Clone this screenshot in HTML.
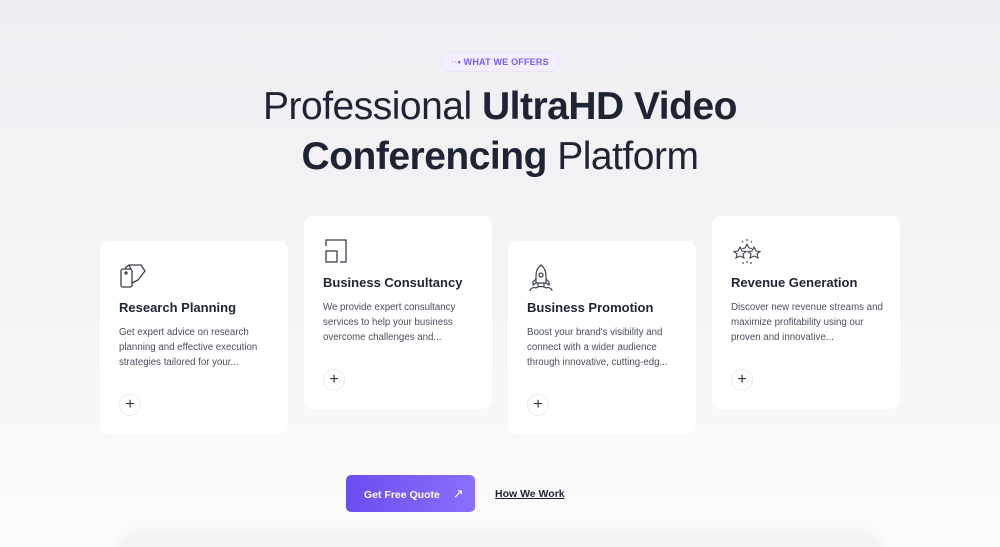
<!DOCTYPE html>
<html style="overflow:hidden;width:1000px;height:547px;background:#fcfcfc"><head><meta charset="utf-8"><style>
*{margin:0;padding:0;box-sizing:border-box}
body{width:1000px;height:547px;overflow:hidden;font-family:"Liberation Sans",sans-serif;background:linear-gradient(#efeef2 0%,#f4f4f6 50%,#fcfcfc 100%);position:relative;color:#1e2433}
.pill{position:absolute;left:441px;top:52px;width:118px;height:20px;border-radius:10px;background:#f3eefe;border:1px solid #ebe4fb;color:#7b5cf0;font-size:9px;font-weight:bold;line-height:18px;text-align:center;letter-spacing:.2px}
h1{position:absolute;left:0;top:82px;width:1000px;text-align:center;font-size:39px;font-weight:normal;line-height:50px;color:#1e2433;letter-spacing:-.5px}
h1 b{font-weight:bold}
.card{position:absolute;width:188px;height:193px;background:#fff;border-radius:9px;padding:0 19px}
.card svg.ic{position:absolute;left:19px;top:22px}
.card h3{position:absolute;left:19px;top:59px;font-size:13px;font-weight:bold;color:#1e2433}
.card p{position:absolute;left:19px;top:84px;width:160px;font-size:9.7px;line-height:15px;color:#4a4f5c}
.plus{position:absolute;left:19px;top:153px;width:22px;height:22px;border-radius:50%;border:1px solid #ececef;text-align:center;line-height:20px;font-size:16px;color:#333}
.btn{position:absolute;left:346px;top:475px;width:129px;height:37px;border-radius:5px;background:linear-gradient(90deg,#6c4df0,#8a70fb);color:#fff;font-size:10.5px;font-weight:bold;line-height:37px;padding-left:18px}
.link{position:absolute;left:495px;top:488px;font-size:10.5px;font-weight:bold;text-decoration:underline;color:#1e2433}
.shadow{position:absolute;left:120px;top:535px;width:760px;height:30px;border-radius:20px;background:#f3f3f3;box-shadow:0 -4px 16px rgba(0,0,0,.05)}
</style></head><body>
<div class="pill"><span style="color:#c8b8fa">··</span>• WHAT WE OFFERS</div>
<h1>Professional <b>UltraHD Video</b><br><b>Conferencing</b> Platform</h1>

<div class="card" style="left:100px;top:241px">
<svg class="ic" width="28" height="28" viewBox="0 0 28 28" fill="none" stroke="#3a3f4c" stroke-width="1.3"><rect x="2" y="6" width="11" height="18" rx="2"/><circle cx="7" cy="10" r="1"/><path d="M6 5 L10 2 L22 2 L26 8 L19 17 M13 20 L19 17"/><path d="M10 2 L12 6"/></svg>
<h3>Research Planning</h3>
<p>Get expert advice on research planning and effective execution strategies tailored for your...</p>
<div class="plus">+</div></div>

<div class="card" style="left:304px;top:216px">
<svg class="ic" width="26" height="26" viewBox="0 0 26 26" fill="none" stroke="#3a3f4c" stroke-width="1.3"><path d="M3 8 V2 H23 V24 H17"/><rect x="3" y="13" width="11" height="11"/></svg>
<h3>Business Consultancy</h3>
<p>We provide expert consultancy services to help your business overcome challenges and...</p>
<div class="plus">+</div></div>

<div class="card" style="left:508px;top:241px">
<svg class="ic" width="28" height="30" viewBox="0 0 28 30" fill="none" stroke="#3a3f4c" stroke-width="1.2"><path d="M14 2 C10 5 9 9 9 13 V20 H19 V13 C19 9 18 5 14 2Z"/><circle cx="14" cy="12" r="2"/><path d="M9 16 L6 19 V22 L9 20 M19 16 L22 19 V22 L19 20 M11 20 V23 M17 20 V23 M3 28 C3 25 7 24 9 25 C11 23 17 23 19 25 C21 24 25 25 25 28"/></svg>
<h3>Business Promotion</h3>
<p>Boost your brand's visibility and connect with a wider audience through innovative, cutting-edg...</p>
<div class="plus">+</div></div>

<div class="card" style="left:712px;top:216px">
<svg class="ic" width="32" height="28" viewBox="0 0 32 28" fill="none" stroke="#3a3f4c" stroke-width="1.1"><path d="M9 9 L11 13 L15 13.5 L12 16 L13 20 L9 18 L5 20 L6 16 L3 13.5 L7 13Z"/><path d="M23 9 L25 13 L29 13.5 L26 16 L27 20 L23 18 L19 20 L20 16 L17 13.5 L21 13Z"/><path d="M16 6 L18 10 L21 10.5 M11 10.5 L14 10 L16 6"/><path d="M16 1 V3 M11 3 L12 4.5 M21 3 L20 4.5 M12 24 V26 M16 23 V25 M20 24 V26"/></svg>
<h3>Revenue Generation</h3>
<p>Discover new revenue streams and maximize profitability using our proven and innovative...</p>
<div class="plus">+</div></div>

<div class="btn">Get Free Quote <span style="margin-left:10px;font-weight:normal;font-size:13px">↗</span></div>
<div class="link">How We Work</div>
<div class="shadow"></div>
</body></html>
